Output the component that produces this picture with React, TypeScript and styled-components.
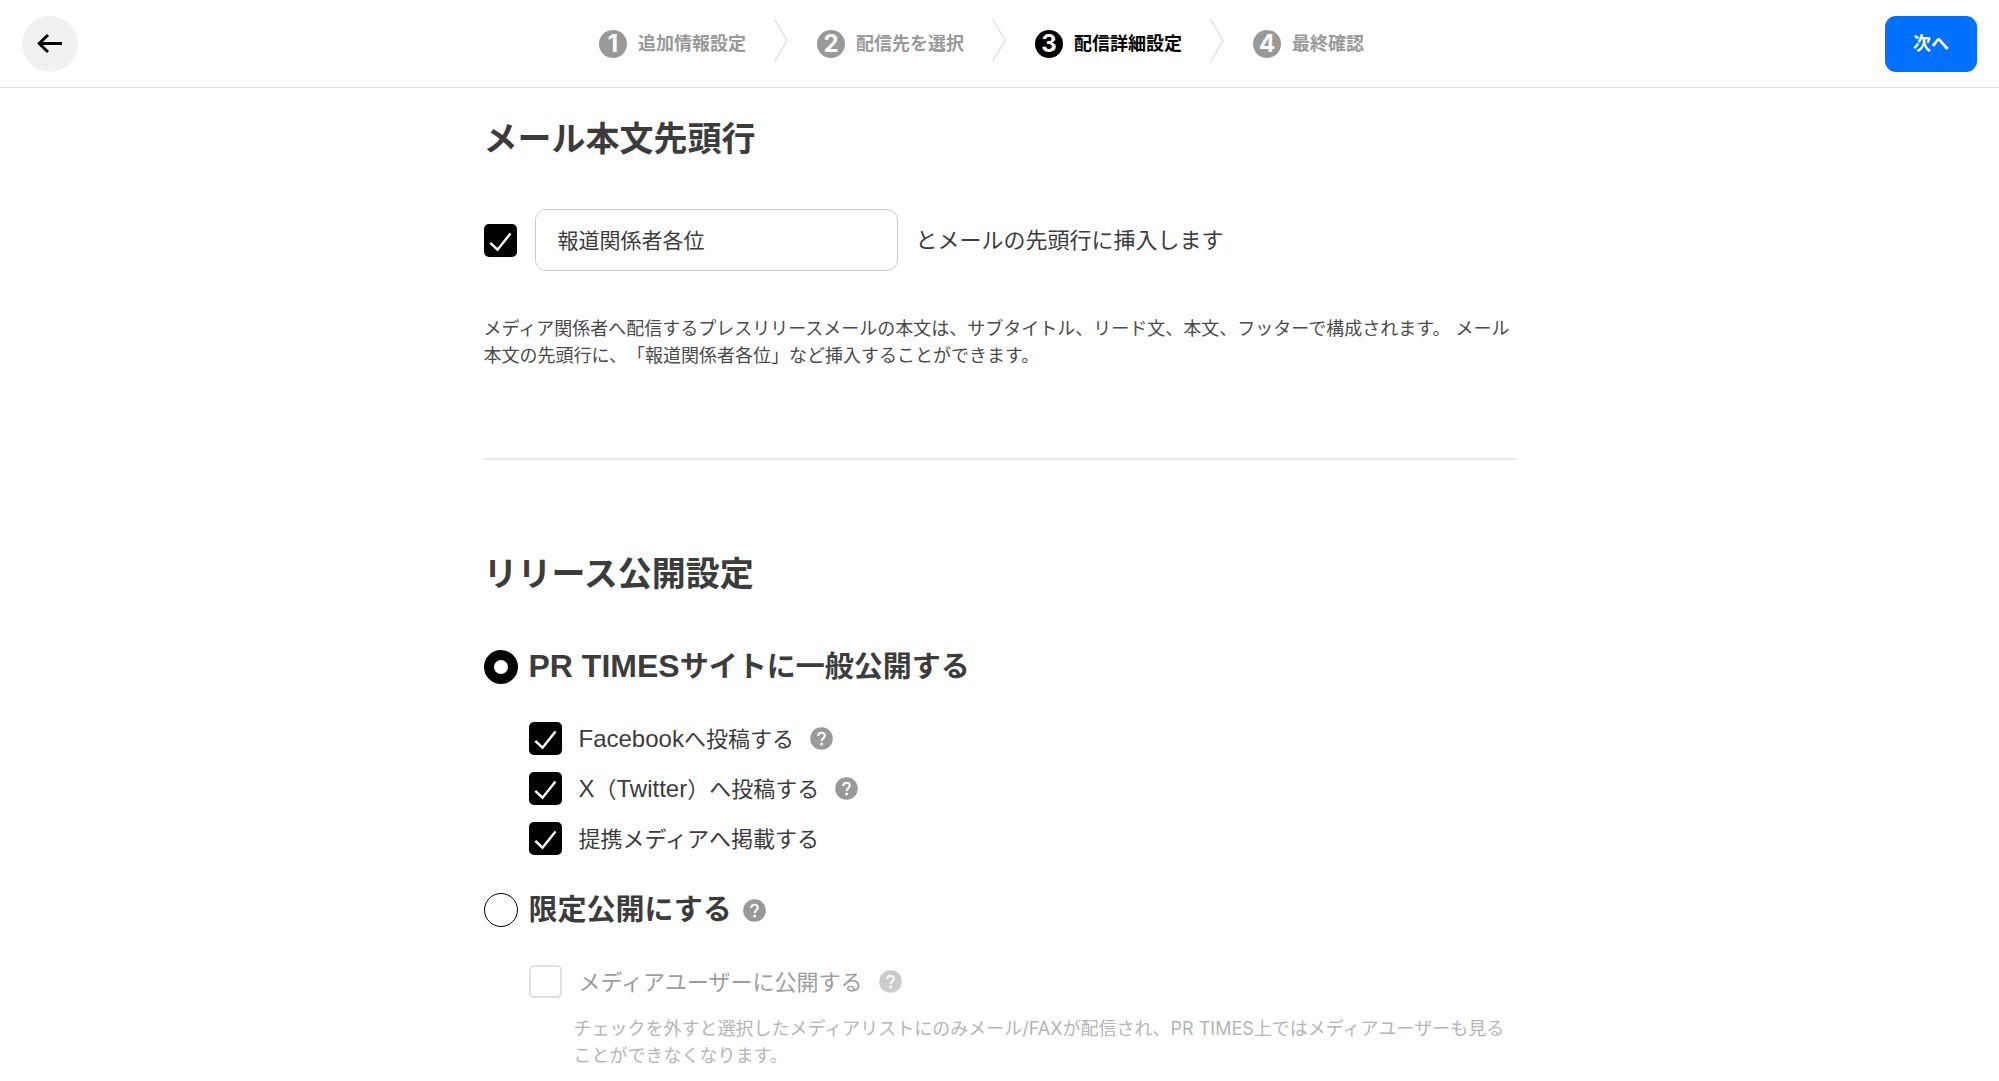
import React, { Fragment } from "react";
import styled, { createGlobalStyle, css } from "styled-components";

const GlobalStyle = createGlobalStyle`
  *, *::before, *::after { box-sizing: border-box; }
  body {
    margin: 0;
    background: #fff;
    color: #3c3c3c;
    font-family: Inter, "Noto Sans CJK JP", sans-serif;
    font-size: 22px;
    line-height: 34px;
    text-spacing-trim: space-all;
  }
  button, input { font: inherit; color: inherit; }
`;

const Header = styled.header`
  display: flex;
  align-items: center;
  justify-content: space-between;
  padding: 16px 22px 15px;
  border-bottom: 1px solid #dedede;
  background: #fff;
`;

const BackButton = styled.button`
  display: grid;
  place-items: center;
  width: 56px;
  height: 56px;
  padding: 0;
  border: 0;
  border-radius: 50%;
  background: #f1f1f1;
  color: #000;
  cursor: pointer;
`;

const NextButton = styled.button`
  height: 56px;
  padding: 0 28px;
  border: 0;
  border-radius: 11px;
  background: #0070ff;
  color: #fff;
  font-size: 18px;
  font-weight: 700;
  cursor: pointer;
`;

const Steps = styled.ol`
  display: flex;
  align-items: center;
  gap: 28px;
  margin: 0;
  padding: 0;
  list-style: none;
`;

const Step = styled.li<{ $active: boolean }>`
  display: flex;
  align-items: center;
  gap: 11px;
  color: ${(p) => (p.$active ? "#000" : "#999")};
  font-size: 18px;
  font-weight: 700;
  line-height: 28px;
`;

const StepNumber = styled.span<{ $active: boolean }>`
  display: grid;
  place-items: center;
  width: 28px;
  height: 28px;
  border-radius: 50%;
  background: ${(p) => (p.$active ? "#000" : "#999")};
  color: #fff;
  font-size: 24px;
`;

const Separator = styled.li`
  display: flex;
  padding: 0 1px 8px 0;
`;

const Main = styled.main`
  max-width: 1032px;
  margin: 0 auto;
  padding: 29px 0 12px;
`;

const Section = styled.section`
  & + & {
    margin-top: 89px;
    padding-top: 92px;
    border-top: 2px solid #e9e9ee;
  }
`;

const SectionTitle = styled.h2`
  margin: 0;
  font-size: 34px;
  font-weight: 700;
  line-height: 44px;
`;

const GreetingRow = styled.div`
  display: flex;
  align-items: center;
  gap: 18px;
  margin-top: 48px;
`;

const TextField = styled.input`
  width: 363px;
  height: 62px;
  padding: 0 22px 2px;
  border: 1px solid #ccc;
  border-radius: 11px;
  background: #fff;
  font-size: 21px;
`;

const Description = styled.p`
  margin: 44px 0 0;
  color: #4a4a4a;
  font-size: 18px;
  line-height: 27px;
`;

const Options = styled.div`
  display: flex;
  flex-direction: column;
  gap: 38px;
  margin-top: 54px;
`;

const RadioRow = styled.div`
  display: flex;
  align-items: center;
  gap: 11px;
`;

const RadioLabel = styled.label`
  display: flex;
  align-items: center;
  gap: 11px;
  font-size: 29px;
  font-weight: 700;
  cursor: pointer;
`;

const Radio = styled.input`
  appearance: none;
  flex: none;
  width: 34px;
  height: 34px;
  margin: 0;
  border: 1px solid #000;
  border-radius: 50%;
  background: #fff;
  &:checked {
    border-width: 10px;
  }
`;

const CheckList = styled.div`
  display: flex;
  flex-direction: column;
  gap: 17px;
  padding-left: 45px;
`;

const CheckRow = styled.div`
  display: flex;
  align-items: center;
  gap: 16px;
  height: 33px;
`;

const CheckLabel = styled.label<{ $disabled?: boolean }>`
  display: flex;
  align-items: center;
  gap: 17px;
  cursor: pointer;
  ${(p) =>
    p.$disabled &&
    css`
      color: #9d9d9d;
      cursor: default;
    `}
`;

const CheckFrame = styled.span`
  display: grid;
  flex: none;
  width: 33px;
  height: 33px;
  & > * {
    grid-area: 1 / 1;
  }
  & > svg {
    pointer-events: none;
    z-index: 1;
  }
`;

const CheckInput = styled.input`
  appearance: none;
  width: 33px;
  height: 33px;
  margin: 0;
  border: 2px solid #000;
  border-radius: 5px;
  background: #fff;
  &:checked {
    background: #000;
  }
  &:disabled {
    border-color: #e0e0e0;
  }
  &:not(:checked) + svg {
    display: none;
  }
`;

const latinSizes = { heading: 32, label: 24 };

const Latin = styled.span<{ $size: keyof typeof latinSizes }>`
  font-family: "Liberation Sans", Arial, sans-serif;
  font-size: ${(p) => latinSizes[p.$size]}px;
  line-height: 1;
`;

const HelpButton = styled.button<{ $muted?: boolean }>`
  display: flex;
  padding: 0;
  border: 0;
  background: none;
  color: ${(p) => (p.$muted ? "#ccc" : "#999")};
  cursor: pointer;
`;

const Note = styled.p`
  margin: -21px 0 0;
  padding-left: 90px;
  color: #b5b5b5;
  font-size: 18px;
  line-height: 27px;
`;

function Checkbox(props: React.InputHTMLAttributes<HTMLInputElement>) {
  return (
    <CheckFrame>
      <CheckInput type="checkbox" {...props} />
      <svg width="33" height="33" viewBox="0 0 33 33" fill="none" aria-hidden="true">
        <path d="M6.3 18.8 13.5 25.7 26.5 9.5" stroke="#fff" strokeWidth="2.4" />
      </svg>
    </CheckFrame>
  );
}

function Help({ topic, muted }: { topic: string; muted?: boolean }) {
  return (
    <HelpButton type="button" aria-label={topic} $muted={muted}>
      <svg width="23" height="23" viewBox="0 0 23 23" fill="none" aria-hidden="true">
        <circle cx="11.5" cy="11.5" r="11.3" fill="currentColor" />
        <path d="M8.2 9C8.2 6.9 9.6 5.8 11.5 5.8s3.3 1.1 3.3 2.9c0 2.3-3.1 2.6-3.1 5.2" stroke="#fff" strokeWidth="2.1" />
        <circle cx="11.6" cy="17.1" r="1.5" fill="#fff" />
      </svg>
    </HelpButton>
  );
}

const steps = ["追加情報設定", "配信先を選択", "配信詳細設定", "最終確認"];
const activeStep = 2;

const posts = [
  { name: "Facebook", label: <><Latin $size="label">Facebook</Latin>へ投稿する</>, help: true },
  {
    name: "X（Twitter）",
    label: <><Latin $size="label">X</Latin>（<Latin $size="label">Twitter</Latin>）へ投稿する</>,
    help: true,
  },
  { name: "提携メディア", label: "提携メディアへ掲載する", help: false },
];

export default function App() {
  return (
    <>
      <GlobalStyle />
      <Header>
        <BackButton type="button" aria-label="戻る">
          <svg width="26" height="20" viewBox="0 0 26 20" fill="none" aria-hidden="true">
            <path d="M25 9.5H2M11 1 2.2 9.5 11 18" stroke="currentColor" strokeWidth="2.9" />
          </svg>
        </BackButton>
        <Steps>
          {steps.map((name, i) => (
            <Fragment key={name}>
              {i > 0 && (
                <Separator aria-hidden="true">
                  <svg width="14" height="43" viewBox="0 0 14 43" fill="none">
                    <path d="M.6.5 13.2 21.5.6 42.5" stroke="#dcdcdc" strokeWidth="1.2" />
                  </svg>
                </Separator>
              )}
              <Step $active={i === activeStep} aria-current={i === activeStep ? "step" : undefined}>
                <StepNumber $active={i === activeStep}>{i + 1}</StepNumber>
                {name}
              </Step>
            </Fragment>
          ))}
        </Steps>
        <NextButton type="button">次へ</NextButton>
      </Header>

      <Main>
        <Section>
          <SectionTitle>メール本文先頭行</SectionTitle>
          <GreetingRow>
            <Checkbox id="greeting-on" defaultChecked aria-labelledby="greeting-label" />
            <TextField id="greeting" type="text" defaultValue="報道関係者各位" />
            <label id="greeting-label" htmlFor="greeting">とメールの先頭行に挿入します</label>
          </GreetingRow>
          <Description>
            メディア関係者へ配信するプレスリリースメールの本文は、サブタイトル、リード文、本文、フッターで構成されます。 メール本文の先頭行に、「報道関係者各位」など挿入することができます。
          </Description>
        </Section>

        <Section>
          <SectionTitle>リリース公開設定</SectionTitle>
          <Options>
            <RadioRow>
              <RadioLabel>
                <Radio type="radio" name="visibility" value="public" defaultChecked />
                <span>
                  <Latin $size="heading">PR TIMES</Latin>サイトに一般公開する
                </span>
              </RadioLabel>
            </RadioRow>
            <CheckList>
              {posts.map((post) => (
                <CheckRow key={post.name}>
                  <CheckLabel>
                    <Checkbox defaultChecked />
                    <span>{post.label}</span>
                  </CheckLabel>
                  {post.help && <Help topic={post.name} />}
                </CheckRow>
              ))}
            </CheckList>
            <RadioRow>
              <RadioLabel>
                <Radio type="radio" name="visibility" value="limited" />
                限定公開にする
              </RadioLabel>
              <Help topic="限定公開にする" />
            </RadioRow>
            <CheckList>
              <CheckRow>
                <CheckLabel $disabled>
                  <Checkbox disabled />
                  メディアユーザーに公開する
                </CheckLabel>
                <Help topic="メディアユーザーに公開する" muted />
              </CheckRow>
            </CheckList>
            <Note>
              チェックを外すと選択したメディアリストにのみメール/FAXが配信され、PR TIMES上ではメディアユーザーも見ることができなくなります。
            </Note>
          </Options>
        </Section>
      </Main>
    </>
  );
}
